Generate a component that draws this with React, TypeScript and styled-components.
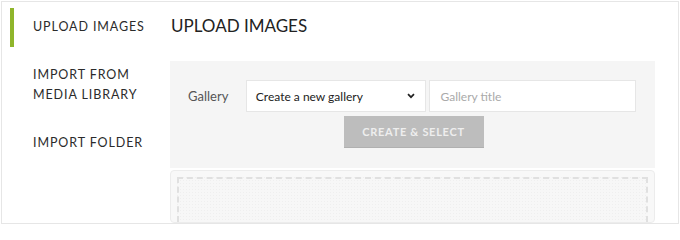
import styled, { createGlobalStyle } from "styled-components"

const GlobalStyle = createGlobalStyle`
  html, body {
    margin: 0;
    padding: 0;
    background: #ffffff;
  }
  body {
    font-family: Lato, "Liberation Sans", sans-serif;
  }
`

const Style = {
  Frame: styled.div`
    box-sizing: border-box;
    margin: 1px 1px 0 1px;
    width: 678px;
    height: 223px;
    border: 1px solid #e6e6e6;
    display: flex;
    padding: 6px 0 0 8px;
    overflow: hidden;
  `,
  Sidebar: styled.nav`
    width: 132px;
    flex-shrink: 0;
    display: flex;
    flex-direction: column;
    gap: 9px;
  `,
  Tab: styled.div<{ $active?: boolean }>`
    border-left: 4px solid ${(p) => (p.$active ? "#8fb52b" : "transparent")};
    padding: 9px 0 10px 19px;
    font-size: 12.5px;
    line-height: 20px;
    letter-spacing: 0.9px;
    color: #2b2b2b;
    text-transform: uppercase;
    white-space: nowrap;
  `,
  Main: styled.main`
    margin-left: 28px;
    width: 485px;
    display: flex;
    flex-direction: column;
  `,
  Title: styled.h2`
    margin: 3px 0 20px 1px;
    font-size: 17px;
    line-height: 30px;
    font-weight: 400;
    color: #222;
  `,
  Panel: styled.div`
    background: #f5f5f5;
    padding: 19px 19px 20px 18px;
    display: flex;
    flex-direction: column;
    align-items: center;
  `,
  Row: styled.div`
    align-self: stretch;
    display: flex;
    align-items: center;
    gap: 3px;
  `,
  Label: styled.label`
    width: 55px;
    font-size: 13px;
    color: #555;
  `,
  Select: styled.div`
    box-sizing: border-box;
    width: 181px;
    height: 32px;
    background: #fff;
    border: 1px solid #e6e6e6;
    display: flex;
    align-items: center;
    justify-content: space-between;
    padding: 0 10px 0 9px;
    font-size: 12px;
    color: #222;
  `,
  Input: styled.div`
    box-sizing: border-box;
    width: 207px;
    height: 32px;
    background: #fff;
    border: 1px solid #e6e6e6;
    display: flex;
    align-items: center;
    padding: 0 10px;
    font-size: 12px;
    color: #aaa;
  `,
  Button: styled.div`
    box-sizing: border-box;
    margin-top: 4px;
    margin-left: 3px;
    width: 140px;
    height: 32px;
    background: #bdbdbd;
    border-bottom: 1px solid #b0b0b0;
    display: flex;
    align-items: center;
    justify-content: center;
    font-size: 11px;
    font-weight: 700;
    letter-spacing: 0.7px;
    color: #eeeeee;
  `,
  Dropzone: styled.div`
    margin-top: 2px;
    flex: 1;
    border: 1px solid #ececec;
    border-radius: 4px;
    background: #f8f8f8;
    padding: 6px 6px 0 6px;
    display: flex;
  `,
  DropArea: styled.div`
    flex: 1;
    border: 2px dashed #e0e0e0;
    border-bottom: none;
    background-color: #f7f7f7;
    background-image: radial-gradient(#efefef 0.6px, transparent 0.6px);
    background-size: 3px 3px;
  `,
}

function Chevron() {
  return (
    <svg width="8" height="6" viewBox="0 0 8 6">
      <path
        d="M1 1.2l3 3 3-3"
        fill="none"
        stroke="#222"
        strokeWidth="1.7"
      />
    </svg>
  )
}

export default function App() {
  return (
    <>
      <GlobalStyle />
      <Style.Frame>
        <Style.Sidebar>
          <Style.Tab $active>Upload Images</Style.Tab>
          <Style.Tab>
            Import From
            <br />
            Media Library
          </Style.Tab>
          <Style.Tab>Import Folder</Style.Tab>
        </Style.Sidebar>
        <Style.Main>
          <Style.Title>UPLOAD IMAGES</Style.Title>
          <Style.Panel>
            <Style.Row>
              <Style.Label>Gallery</Style.Label>
              <Style.Select>
                <span>Create a new gallery</span>
                <Chevron />
              </Style.Select>
              <Style.Input>Gallery title</Style.Input>
            </Style.Row>
            <Style.Button>CREATE &amp; SELECT</Style.Button>
          </Style.Panel>
          <Style.Dropzone>
            <Style.DropArea />
          </Style.Dropzone>
        </Style.Main>
      </Style.Frame>
    </>
  )
}
